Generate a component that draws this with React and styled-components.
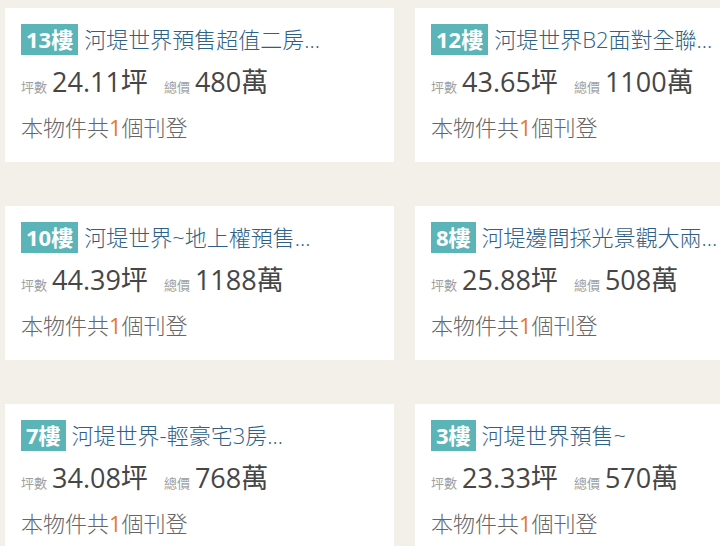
import React from 'react'
import styled, { createGlobalStyle } from 'styled-components'

const GlobalStyle = createGlobalStyle`
  html, body {
    margin: 0;
    padding: 0;
    background: #f3f0e9;
    overflow: hidden;
  }
  body {
    font-family: "Open Sans", "Noto Sans CJK TC", sans-serif;
  }
`

const Page = styled.div`
  width: 720px;
  height: 546px;
  overflow: hidden;
  background: #f3f0e9;
`

const Grid = styled.div`
  display: grid;
  grid-template-columns: 389px 389px;
  column-gap: 21px;
  row-gap: 44px;
  padding: 8px 0 0 5px;
`

const Card = styled.div`
  background: #fff;
  height: 154px;
  box-sizing: border-box;
  padding: 16px 16px 0;
`

const TitleRow = styled.div`
  display: flex;
  align-items: center;
  gap: 6px;
  height: 31px;
  white-space: nowrap;
`

const Floor = styled.span`
  display: inline-block;
  background: #5bb4b8;
  color: #fff;
  font-size: 22px;
  font-weight: 700;
  height: 31px;
  line-height: 31px;
  padding: 0 5px;
`

const Title = styled.span`
  color: #2f6186;
  font-size: 22px;
  font-weight: 300;
  line-height: 31px;
`

const Stats = styled.div`
  display: flex;
  align-items: baseline;
  margin-top: 9px;
  height: 36px;
  line-height: 36px;
  white-space: nowrap;
`

const Label = styled.span`
  font-size: 13px;
  color: #a0a0a0;
  margin-right: 5px;
`

const Value = styled.span`
  font-size: 27px;
  color: #464646;
  margin-right: ${p => (p.$last ? 0 : 16)}px;
`

const Listing = styled.div`
  margin-top: 12px;
  font-size: 22px;
  font-weight: 300;
  line-height: 30px;
  color: #666;
  white-space: nowrap;
`

const Count = styled.span`
  color: #e57a2b;
  font-weight: 400;
`

const items = [
  { floor: '13樓', title: '河堤世界預售超值二房...', area: '24.11坪', price: '480萬' },
  { floor: '12樓', title: '河堤世界B2面對全聯...', area: '43.65坪', price: '1100萬' },
  { floor: '10樓', title: '河堤世界~地上權預售...', area: '44.39坪', price: '1188萬' },
  { floor: '8樓', title: '河堤邊間採光景觀大兩...', area: '25.88坪', price: '508萬' },
  { floor: '7樓', title: '河堤世界-輕豪宅3房...', area: '34.08坪', price: '768萬' },
  { floor: '3樓', title: '河堤世界預售~', area: '23.33坪', price: '570萬' },
]

const HouseCard = ({ item }) => (
  <Card>
    <TitleRow>
      <Floor>{item.floor}</Floor>
      <Title>{item.title}</Title>
    </TitleRow>
    <Stats>
      <Label>坪數</Label>
      <Value>{item.area}</Value>
      <Label>總價</Label>
      <Value $last>{item.price}</Value>
    </Stats>
    <Listing>
      本物件共<Count>1</Count>個刊登
    </Listing>
  </Card>
)

export default function App() {
  return (
    <Page>
      <GlobalStyle />
      <Grid>
        {items.map(item => (
          <HouseCard key={item.floor} item={item} />
        ))}
      </Grid>
    </Page>
  )
}
